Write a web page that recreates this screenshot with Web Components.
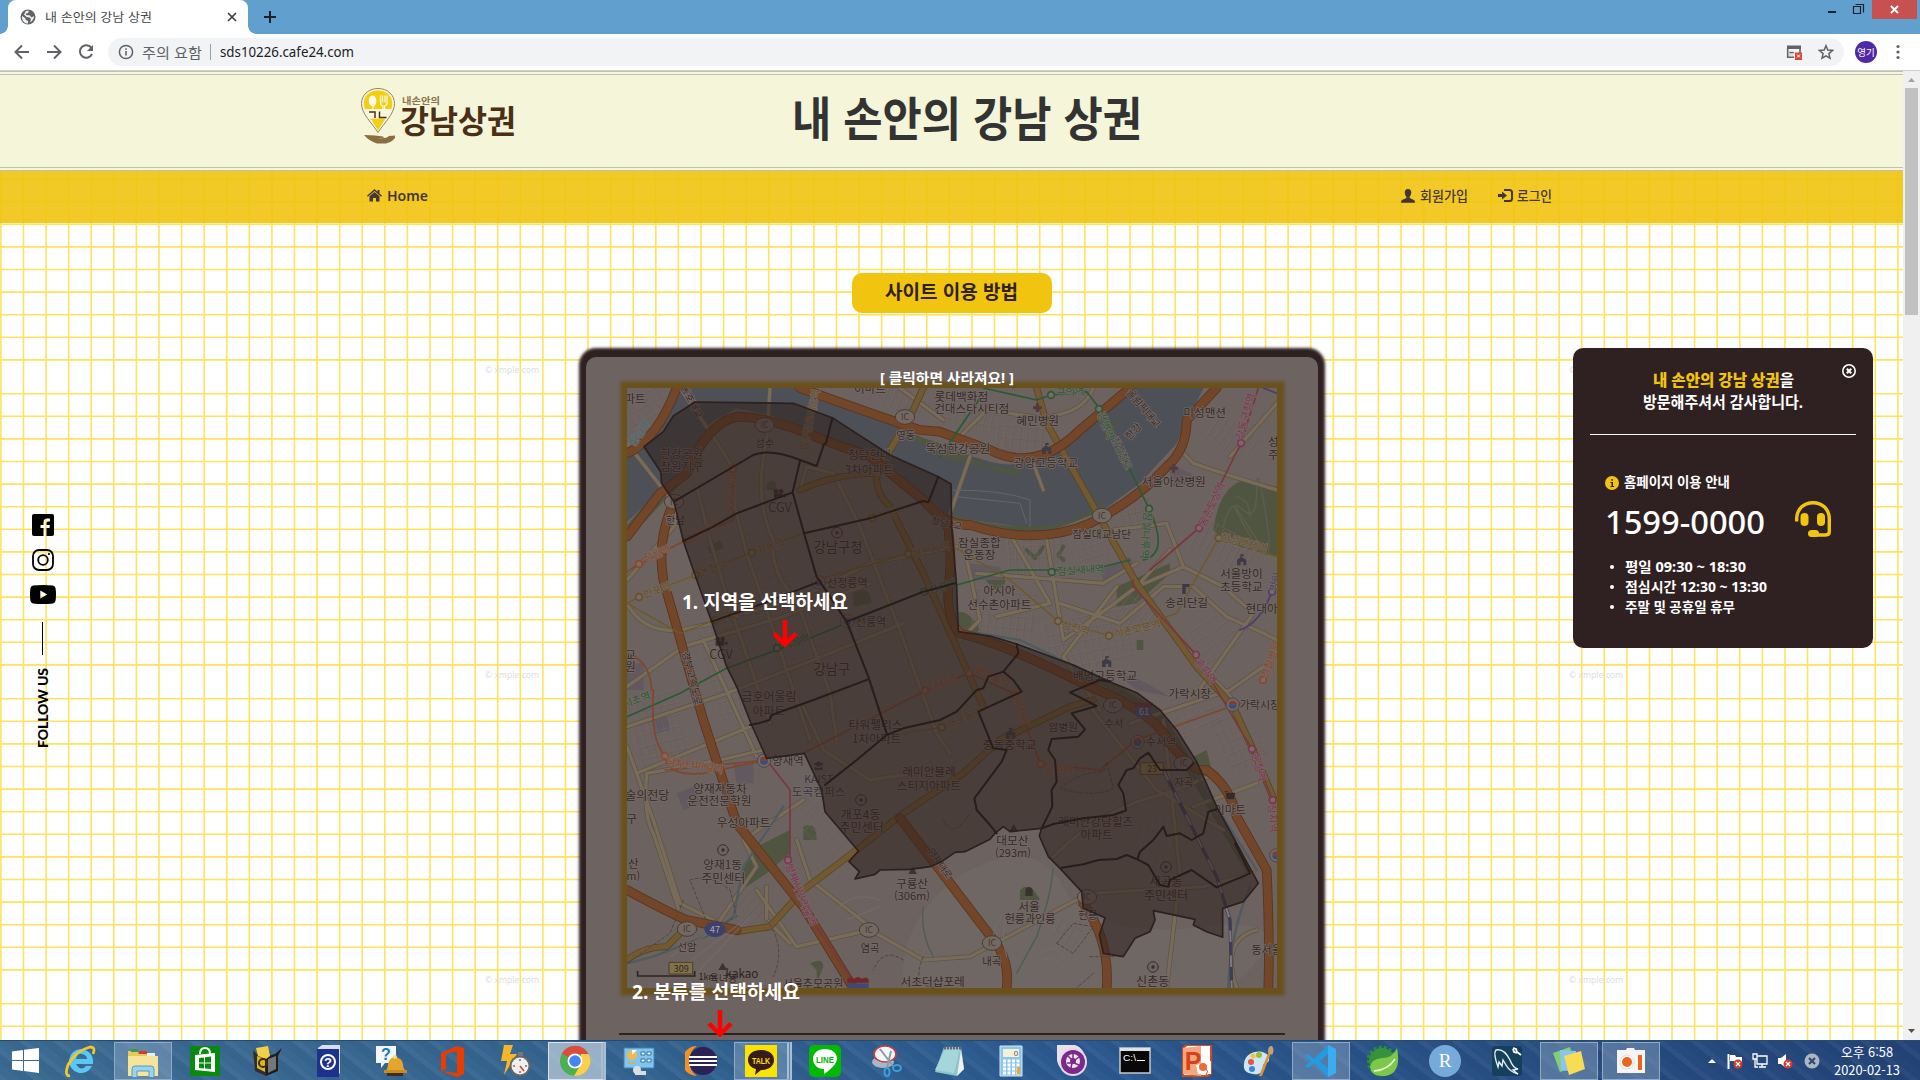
<!DOCTYPE html>
<html lang="ko">
<head>
<meta charset="utf-8">
<title>내 손안의 강남 상권</title>
<style>
html,body{margin:0;padding:0;height:100%;overflow:hidden;background:#fff;font-family:"Noto Sans","Noto Sans CJK KR",sans-serif}
</style>
</head>
<body>
<desk-top></desk-top>
<script>
function define(name, html, after){
  customElements.define(name, class extends HTMLElement{
    connectedCallback(){
      if(this.shadowRoot) return;
      const root=this.attachShadow({mode:'open'});
      const t=document.createElement('template');
      t.innerHTML=typeof html==='function'?html(this):html;
      root.appendChild(t.content.cloneNode(true));
      if(after) after(this,root);
    }
  });
}

/* One line of text stretched to a given width */
define('fit-text',`<style>:host{display:inline-block;white-space:nowrap;line-height:1.2;flex:none}span{display:inline-block;transform-origin:0 50%}</style><span><slot></slot></span>`,
 (el,root)=>{
  const w=+el.getAttribute('w'), s=root.querySelector('span');
  const n=s.getBoundingClientRect().width;
  el.style.width=w+'px';
  if(n) s.style.transform='scaleX('+w/n+')';
 });

define('browser-chrome',`
<style>
:host{display:flex;flex-direction:column;height:71px;flex:none;font-family:"Noto Sans CJK KR",sans-serif}
.strip{height:34px;background:#619fcf;display:flex;align-items:stretch}
.tab{margin-left:8px;width:240px;background:#fff;border-radius:8px 8px 0 0;display:flex;align-items:center;font-size:12px;color:#45494d;position:relative}
.tab:before,.tab:after{content:"";position:absolute;bottom:0;width:8px;height:8px}
.tab:before{left:-8px;background:radial-gradient(circle at 0 0,transparent 7.5px,#fff 8px)}
.tab:after{right:-8px;background:radial-gradient(circle at 100% 0,transparent 7.5px,#fff 8px)}
.tab>svg:first-child{margin:0 9px 0 12px}
.tab .x{margin-left:auto;margin-right:11px}
.plus{margin:11px 0 0 16px}
.win{margin-left:auto;display:flex;align-items:flex-start;margin-right:3px}
.close{width:45px;height:19px;background:#c75050;display:flex;align-items:center;justify-content:center}
.bar{height:36px;background:#fff;display:flex;align-items:center;border-bottom:1px solid #cfd1ce}
.nav{display:flex;gap:12px;padding-left:12px;width:96px;box-sizing:border-box}
.omni{width:1736px;height:28px;border-radius:14px;background:#f1f3f4;display:flex;align-items:center;box-sizing:border-box;font-size:14px;color:#5f6368;margin-left:12px}
.omni .i{margin:0 8px 0 10px}
.div{width:1px;height:16px;background:#9aa0a6;margin:0 9px 0 8px}
.url{color:#202124;font-family:"Noto Sans",sans-serif}
.pop{margin-left:auto;margin-right:15px}.star{margin-right:10px}
.av{width:22px;height:22px;border-radius:50%;background:#4f2aa8;color:#fff;font-size:9.5px;display:flex;align-items:center;justify-content:center;margin:0 19px 0 11px}
</style>
<div class="strip">
 <div class="tab"><svg width="16" height="16" viewBox="0 0 16 16"><circle cx="8" cy="8" r="7.500" fill="#5f6368"/><path d="M2 7l3 2 1 2 2 1v2.600C4 14.500 1.500 11 2 7zM6 2l3-.5-1 2.500-2 .5v1.500l4 .5 1.500 2L14 7c0 3-1.500 5-4 6.300L11 10 9.500 8.500 6.500 8 4 5.500z" fill="#fff" opacity=".9"/></svg>
 <fit-text w="107">내 손안의 강남 상권</fit-text>
 <svg class="x" width="10" height="10" viewBox="0 0 10 10" stroke="#3c4043" stroke-width="1.700"><path d="M1 1l8 8M9 1l-8 8"/></svg></div>
 <svg class="plus" width="12" height="12" viewBox="0 0 12 12" stroke="#202124" stroke-width="2"><path d="M6 0v12M0 6h12"/></svg>
 <div class="win"><svg width="44" height="19" viewBox="0 0 44 19" fill="none" stroke="#202124"><path d="M0 12h8" stroke-width="2"/><path d="M25.500 6.500h7v7h-7zM25 6.500h8M27.500 4.500h8v8" stroke-width="1.200"/></svg>
 <div class="close"><svg width="9" height="9" viewBox="0 0 9 9" stroke="#fff" stroke-width="2"><path d="M1 1l7 7M8 1l-7 7"/></svg></div></div>
</div>
<div class="bar">
 <div class="nav">
 <svg width="20" height="20" viewBox="0 0 20 20" fill="none" stroke="#5f6368" stroke-width="2"><path d="M17 10H4M10 3.500L3.500 10l6.500 6.500"/></svg>
 <svg width="20" height="20" viewBox="0 0 20 20" fill="none" stroke="#5f6368" stroke-width="2"><path d="M3 10h13M10 3.500l6.500 6.500-6.500 6.500"/></svg>
 <svg width="20" height="20" viewBox="0 0 20 20" fill="none" stroke="#5f6368" stroke-width="2"><path d="M15.500 6A6.300 6.300 0 1 0 16 12"/><path d="M17 3v6h-6z" fill="#5f6368" stroke="none"/></svg></div>
 <div class="omni">
  <svg class="i" width="16" height="16" viewBox="0 0 16 16"><circle cx="8" cy="8" r="6.600" fill="none" stroke="#5f6368" stroke-width="1.500"/><path d="M8 7v4.500M8 4.200v1.600" stroke="#5f6368" stroke-width="1.600"/></svg>
  <fit-text w="60">주의 요함</fit-text><i class="div"></i><fit-text class="url" w="134">sds10226.cafe24.com</fit-text>
  <svg class="pop" width="17" height="16" viewBox="0 0 17 16"><path d="M1.700 4v9.300H8M14 4v5" fill="none" stroke="#5f6368" stroke-width="1.600"/><path d="M1 1.500h14V5H1z" fill="#5f6368"/><path d="M3 8h5v1.500H3zM3 11h4" stroke="#c4c7c9"/><path d="M9 8.500h7V16H9z" fill="#db4437"/><path d="M11 10.500l3 3M14 10.500l-3 3" stroke="#fff"/></svg>
  <svg class="star" width="16" height="16" viewBox="0 0 16 16" fill="none" stroke="#5f6368" stroke-width="1.500"><path d="M8 1.700l1.800 4.400 4.700.4-3.600 3.100 1.100 4.600L8 11.800l-4 2.400 1.100-4.600L1.500 6.500l4.700-.4z"/></svg>
 </div>
 <div class="av">영기</div>
 <svg width="4" height="16" viewBox="0 0 4 16" fill="#5f6368"><circle cx="2" cy="2.500" r="1.600"/><circle cx="2" cy="8" r="1.600"/><circle cx="2" cy="13.500" r="1.600"/></svg>
</div>`);

/* Notebook grid that repeats every 1084 x 305 px */
define('grid-paper',()=>{
  let v='',h='',t='';
  for(let i=0;i<85;i++) v+=`M${(0.9+i*22.583).toFixed(2)} 0V969`;
  for(let k=-1;k<4;k++) for(let j=0;j<13;j++){const y=17.700+k*305+j*22.600; if(y>0&&y<969) h+=`M0 ${y.toFixed(2)}H1903`;}
  for(const x of [485,1569]) for(const y of [302,607,912]) t+=`<text x="${x}" y="${y}" textLength="54" lengthAdjust="spacingAndGlyphs">© xmple.com</text>`;
  return `<style>:host{display:block}svg{display:block}text{font:9.500px "Noto Sans",sans-serif;fill:#dedede}</style>
  <svg width="1903" height="969"><path d="${v}${h}" stroke="#ffe14f" stroke-width="1.600" opacity=".92"/>${t}</svg>`;
});

define('site-header',`
<style>
:host{display:block;height:100px;box-sizing:border-box;background:#f5f5d9;border-top:4px double #c0c1b1;border-bottom:4px double #c0c1b1;flex:none}
.row{display:flex;align-items:flex-start;height:92px;padding-left:360px}
.pin{margin-top:12px}
.name{display:flex;flex-direction:column;margin:19px 0 0 5px;width:120px;font-family:"Noto Sans CJK KR",sans-serif}
.s{font-size:9.500px;font-weight:700;color:#8b7348;line-height:12px;margin-left:1px}
.b{font-size:32px;font-weight:700;color:#4b3016;line-height:31px;margin-left:-1px;margin-top:-2px}
.t{margin:13px 0 0 271px;font:700 47px/56px "Noto Sans CJK KR",sans-serif;color:#333}
</style>
<div class="row">
<svg class="pin" width="36" height="58" viewBox="0 0 36 58"><path d="M18 1.500C8 1.500 1.500 8.500 1.500 16.500 1.500 27 12 36 18 45.500 24 36 34.500 27 34.500 16.500 34.500 8.500 28 1.500 18 1.500z" fill="#f9f6df" stroke="#97855a" stroke-width="1"/><path d="M18 3.500C9 3.500 4 9 3.800 16.500q0 3 1 5.500h26.500q1-2.500 1-5.500C32 9 27 3.500 18 3.500zM10.500 31.500h15L18 43.500z" fill="#f3cf14"/><path d="M12.500 8.500c-5 0-5 10 0 11v3c0 1 1 1 1 0v-3c4-1 4-11-1-11z" fill="#fffbe9"/><path d="M20.500 8.500v7q0 3 2.500 3.500v4h1.500v-4q2.500-.5 2.500-3.500v-7M22.500 8.500v7M25 8.500v7" stroke="#fffbe9" fill="none" stroke-width="1.200"/><path d="M9 25h6v6M19.500 24.500v6h7" stroke="#4b3016" stroke-width="1.500" fill="none"/><path d="M4 48q7 0 11 .5l8 1q2 1-1 1.500h-4q8 1 11-2l6-.5v2.500q-3 4-9 5.500H17Q9 54 4 48z" fill="#8b6d42"/></svg>
<div class="name"><fit-text class="s" w="38">내손안의</fit-text><fit-text class="b" w="116">강남상권</fit-text></div>
<fit-text class="t" w="350">내 손안의 강남 상권</fit-text>
</div>`);

define('site-nav',`
<style>
:host{display:flex;height:52px;box-sizing:border-box;align-items:center;background:#f1c40f;opacity:.9;padding:0 351px 3px 367px;font:700 14px "Noto Sans CJK KR",sans-serif;color:#2f2122;flex:none}
.i{display:flex;align-items:center}
.home{font:600 15px "Noto Sans",sans-serif}
.j{margin-left:auto;margin-right:30px}
.kr{font-weight:500;font-size:13.500px}
fit-text{padding-bottom:1px}
</style>
<div class="i home"><svg width="15" height="13" viewBox="0 0 15 13" fill="#2f2122" style="margin-right:5px"><path d="M7.500 0L0 6.700l.9 1L7.500 2l6.600 5.700.9-1-2.500-2.200V1h-2v1.700zM7.500 3L2.500 7.300V12.500H6V9h3v3.500h3.500V7.300z"/></svg><fit-text w="41">Home</fit-text></div>
<div class="i kr j"><svg width="14" height="14" viewBox="0 0 14 14" fill="#2f2122" style="margin-right:5px"><path d="M7 0c-2.500 0-3.500 2-3.200 4.200.2 1.500.8 2.800 1.600 3.600V9L1 11Q0 11.500 0 13.800h14Q14 11.500 13 11L8.600 9V7.800c.8-.8 1.400-2.100 1.600-3.600C10.500 2 9.500 0 7 0z"/></svg><fit-text w="48">회원가입</fit-text></div>
<div class="i kr"><svg width="15" height="13" viewBox="0 0 15 13" fill="#2f2122" style="margin-right:4px"><path d="M0 5h4V2.500L9 6.500 4 10.500V8H0z"/><path d="M6 1h5.500Q14 1 14 3.500v6Q14 12 11.500 12H6" fill="none" stroke="#2f2122" stroke-width="2"/></svg><fit-text w="35">로그인</fit-text></div>`);

define('follow-us',`
<style>
:host{display:flex;flex-direction:column;align-items:center;width:28px}
.l{width:1px;height:33px;background:#000;margin:18px 1px 13px 0;flex:none}
.t{writing-mode:vertical-rl;transform:rotate(180deg);font:900 14px/16px Lato,sans-serif;height:80px;white-space:nowrap;letter-spacing:-.1px;text-align:left}
svg{display:block}
</style>
<svg width="22" height="22" viewBox="0 0 22 22"><path fill-rule="evenodd" d="M2 0h18q2 0 2 2v18q0 2-2 2h-5.500v-8h3l.4-3h-3.400V9q0-1.600 1.600-1.600h1.800V4.600h-2.700Q11.500 4.600 11.500 8.400V11h-3v3h3v8H2q-2 0-2-2V2q0-2 2-2z"/></svg>
<svg width="22" height="22" viewBox="0 0 22 22" fill="none" stroke="#000" stroke-width="1.800" style="margin:13px 0 14px"><rect x="1" y="1" width="20" height="20" rx="6"/><circle cx="11" cy="11" r="4.800"/><circle cx="17" cy="5" r=".7" fill="#000" stroke-width="1"/></svg>
<svg width="26" height="19" viewBox="0 0 26 19"><path fill-rule="evenodd" d="M3 .6Q13-.6 23 .6q2.300.4 2.600 2.900.8 6 0 12-.3 2.500-2.600 2.900-10 1.200-20 0Q.7 18 .4 15.500q-.8-6 0-12Q.7 1 3 .6zM10.300 5.500v8L17.300 9.500z"/></svg>
<i class="l"></i><div class="t">FOLLOW US</div>`);

define('info-panel',`
<style>
:host{display:flex;flex-direction:column;width:300px;height:300px;box-sizing:border-box;border-radius:10px;background:#2f2122;color:#fff;padding:0 17px;font:700 14px "Noto Sans","Noto Sans CJK KR",sans-serif;position:relative}
.c{position:absolute;right:17px;top:16px}
.h{display:flex;flex-direction:column;align-items:center;padding-top:21px;height:65px;font-size:15.500px;line-height:22px;border-bottom:1px solid #fff}
.h fit-text{line-height:22px}
b{color:#f1c40f}
.n{display:flex;align-items:center;gap:5px;margin:38px 0 0 15px;height:20px;font-size:13.500px}
.n fit-text{padding-bottom:1px}
.p{display:flex;align-items:center;margin-left:15px;height:50px;margin-top:3px}
.p fit-text{font:500 32px "Noto Sans",sans-serif}
.p svg{margin-left:30px;margin-bottom:4px}
ul{margin:11px 0 0;padding:0 0 0 35px;list-style:none;font-size:13.500px}
li{height:20px;display:flex;align-items:center;position:relative}
li:before{content:"";position:absolute;left:-15px;width:4px;height:4px;border-radius:2px;background:#fff}
</style>
<svg class="c" width="14" height="14" viewBox="0 0 14 14" fill="none" stroke="#fff"><circle cx="7" cy="7" r="6.200" stroke-width="1.600"/><path d="M4.800 4.800l4.400 4.400M9.200 4.800L4.800 9.200" stroke-width="2.200"/></svg>
<div class="h"><fit-text w="141"><b>내 손안의 강남 상권</b>을</fit-text><fit-text w="160">방문해주셔서 감사합니다.</fit-text></div>
<div class="n"><svg width="14" height="14" viewBox="0 0 14 14"><circle cx="7" cy="7" r="7" fill="#f1c40f"/><path d="M5.500 6H8v4h1v1H5.500v-1h1V7h-1zM6.300 3h1.600v1.800H6.300z" fill="#2f2122"/></svg><fit-text w="106">홈페이지 이용 안내</fit-text></div>
<div class="p"><fit-text w="160">1599-0000</fit-text><svg width="36" height="36" viewBox="0 0 36 36" fill="none" stroke="#f1c40f"><path d="M1.700 20.500V18C1.700 8 9 1.700 18 1.700S34.300 8 34.300 18v12.500q0 3.500-3.500 3.500H18" stroke-width="3.400"/><rect x="5.500" y="12" width="8" height="13" rx="4" fill="#f1c40f" stroke="none"/><rect x="22" y="12" width="8" height="13" rx="4" fill="#f1c40f" stroke="none"/><rect x="13" y="29" width="11" height="7" rx="3.500" fill="#f1c40f" stroke="none"/></svg></div>
<ul><li><fit-text w="121">평일 09:30 ~ 18:30</fit-text></li><li><fit-text w="142">점심시간 12:30 ~ 13:30</fit-text></li><li><fit-text w="110">주말 및 공휴일 휴무</fit-text></li></ul>`);

/* District map: three drawing units to one pixel */
define('district-map',()=>{
  const area='M222 320L280 275 310 228 375 186 670 190 790 235 960 345 1105 410 1143 432 1145 560 1160 740 1165 875 1260 888 1340 912 1510 975 1630 1030 1700 1058 1770 1110 1820 1170 1880 1265 1940 1400 2065 1630 2020 1685 1958 1705V1792L1910 1775 1870 1755 1875 1738 1750 1712 1755 1740 1740 1775 1695 1795 1660 1850 1600 1840 1588 1785 1605 1733 1540 1705 1535 1655 1470 1585 1435 1550 1408 1488 1415 1465 1320 1475 1300 1460 1275 1480 1260 1498 1185 1535 1155 1537 1115 1565 1080 1580 1020 1588 930 1590 915 1603 855 1617 868 1595 837 1565 865 1533 765 1415 755 1350 703 1240 590 1255 545 1155 500 1040 470 980 425 845 375 705 340 603 312 485 275 430 272 395z';
  const inner='M312 485L550 345Q600 325 690 360L740 378 762 312 768 310 787 235M340 603L430 560 500 520 620 475 668 457 690 362M668 457L702 580 740 710 830 845 895 1010 950 1180M702 580L900 535 1060 483 1075 487 1105 410M425 845L580 790 740 728M830 845L1060 755 1155 730M540 1155L565 1150 598 1140 605 1125 730 1080 895 1018M765 1335L860 1260 950 1185 1000 1165 1110 1140 1160 1115 1220 1050 1240 1045 1255 1010 1300 995 1345 940 1340 912M1300 995L1330 1020 1355 1055 1225 1115 1270 1225 1310 1230 1295 1265 1213 1375 1220 1410 1260 1455 1280 1480M1620 1025L1590 1020 1500 1057 1580 1098 1505 1120 1545 1168 1525 1190 1445 1197 1435 1230 1455 1260 1460 1325 1445 1350 1447 1400 1415 1465 1450 1452 1540 1435 1630 1425 1668 1412 1660 1360 1645 1335 1670 1290 1690 1285 1710 1255 1735 1238 1770 1290 1850 1290 1870 1270M1475 1583L1540 1573 1585 1560 1640 1557 1670 1545 1702 1558 1735 1575 1770 1635 1795 1640 1800 1620 1865 1590 1940 1642 2040 1600 1995 1510M1702 1558L1710 1535 1750 1500 1780 1460 1790 1488 1830 1480 1865 1500 1900 1480 1915 1415 1940 1408';
  const orange='M171 340Q260 300 320 144M690 144Q900 220 1050 270L1110 275 1260 330Q1400 400 1530 270L1680 144M171 590L270 460 350 400Q410 250 500 230 600 230 760 300L900 350 1060 480Q1130 560 1200 555 1400 620 1560 550 1700 480 1790 380 1850 330 1850 240L1940 144M1130 540Q1150 650 1135 740 1130 840 1170 880 1300 910 1560 1040 1760 1120 1800 1210 1870 1300 1910 1290 1980 1340 2000 1430L2090 1590Q2100 1800 2095 1944M310 490Q260 600 280 720L400 1140 500 1450 620 1600 700 1700 850 1944M171 1650Q300 1720 350 1740L500 1770M990 1435L1110 1590 1270 1800Q1320 1860 1310 1944M1540 1690Q1620 1800 1610 1944';
  const gold='M1060 144L1020 230 930 380Q900 440 960 500L1060 700 1240 1100M1400 144L1430 250 1560 480 1700 730 1880 980 1990 1100 2050 1230 2121 1400M920 400Q800 400 690 450M860 1530L700 1650 600 1760 500 1775M171 1860Q220 1820 290 1820L350 1760M860 1530L1000 1420 1180 1300 1290 1200 1500 1100 1570 1080';
  const minor='M171 310L320 500 312 560 171 720M480 370L430 290 330 144M600 144L590 300Q550 480 610 600 600 700 680 780L780 1060 800 1200M690 450L710 380 790 400 870 560 1000 900 1100 1180 1140 1240M171 790Q220 880 330 870L430 850 700 770 900 670 1160 620M171 1040L340 920 640 830 900 730M380 440L420 600 480 800 600 1150M490 480L530 640 620 900 720 1200M400 900L560 1250M171 1160L470 1060 730 960 1000 850M200 1300L540 1160M171 1220L250 1440 330 1690 430 1740M230 1300L450 1260 580 1230M230 1300Q220 1430 250 1480L330 1720M430 1770L560 1580 520 1500 700 1380M700 1100L760 1230 900 1320 1100 1290M560 1650L680 1820 900 1770 1060 1860 1200 1850 1500 1690 1560 1660 1900 1640 2050 1600M680 1500L720 1620 900 1760M590 1640V1740L660 1810M1180 610L1230 840 1170 900M1330 600L1440 790 1280 830M1430 600L1480 900 1620 800 1700 740 1840 680M1630 570L1790 550 1840 680 1960 740 2050 820 1880 1060M1640 740L1480 950 1590 1110M1470 790L1650 850 1780 740 1870 740 1970 830 2060 870 2121 900M1800 870L1990 1080M1800 630L1700 740M1680 1150L1980 1050 2080 980M1870 1400L2060 1330M1450 1550Q1600 1400 1790 1360L1940 1300M1780 1140L1830 1600 1790 1944M1560 1100L1760 1350 1960 1470M2000 1944Q1950 1800 2060 1770M1200 350L1120 580M1120 240L990 144M1170 290L1250 210 1390 230M1430 230Q1540 220 1570 144M1820 320L1870 370 1990 410 2121 450M1980 350L2121 190M1420 450L1390 370M1220 700L1600 730 1700 670';
  let fine='';
  const hatch=(x,y,w,h,a,s)=>{const c=Math.cos(a),d=Math.sin(a);for(let i=-w/2;i<=w/2;i+=s)fine+=`M${(x+i*c+h/2*d).toFixed(0)} ${(y+i*d-h/2*c).toFixed(0)}L${(x+i*c-h/2*d).toFixed(0)} ${(y+i*d+h/2*c).toFixed(0)}`;for(let j=-h/2;j<=h/2;j+=s*1.600)fine+=`M${(x-w/2*c-j*d).toFixed(0)} ${(y-w/2*d+j*c).toFixed(0)}L${(x+w/2*c-j*d).toFixed(0)} ${(y+w/2*d+j*c).toFixed(0)}`;};
  [[230,210,110,100,-.5],[500,640,260,240,-.28],[700,860,260,300,-.28],[870,490,280,120,-.25],[900,1000,260,280,-.35],[1030,680,150,200,-.3],[270,1170,150,210,-.25],[470,980,120,300,-.28],[1210,220,150,90,.2],[980,180,160,60,.4],[1560,900,260,150,-.2],[1300,820,180,130,.1],[1400,640,170,120,-.05],[1720,820,130,110,.6],[1960,620,180,100,.5],[1920,900,170,110,-.6],[1700,520,100,80,-.2],[1990,300,150,90,.6],[1350,300,140,80,.1],[780,1450,140,150,-.8],[1050,1240,200,150,-.5],[1330,1160,170,130,-.3],[1880,1110,130,120,-.4],[2010,1200,120,160,-.4],[1490,1780,70,60,.5],[540,1710,80,80,.7],[1750,1500,110,150,.2],[1560,620,90,80,-.3]].forEach(a=>hatch(...a,22));
  const brown='#352a28',L=[];
  const T=(x,y,s,o={})=>L.push(`<text x="${x}" y="${y}" fill="${o.c||brown}" font-size="${o.s||35}"${o.r?` transform="rotate(${o.r} ${x} ${y-10})"`:''}>${s}</text>`);
  T(195,190,'파트',{});T(335,355,'한강공원');T(335,393,'잠원지구');T(584,320,'성수',{s:31});T(898,358,'청담현대');T(898,401,'3차아파트');T(900,158,'이마트');T(1174,182,'롯데백화점');T(1205,218,'건대스타시티점');T(1007,297,'영동',{s:31});T(1164,338,'뚝섬한강공원');T(1403,254,'혜민병원');T(1428,380,'광양고등학교');T(1904,232,'미성맨션');T(1811,438,'서울아산병원');T(1595,593,'잠실대교남단',{s:32});T(1228,620,'잠실종합');T(1228,658,'운동장');T(1288,764,'아시아');T(1288,808,'선수촌아파트');T(2014,714,'서울방이');T(2014,753,'초등학교');T(1850,801,'송리단길');T(2075,818,'현대아');T(1605,1019,'배명고등학교');T(1859,1073,'가락시장');T(630,515,'CGV',{s:38});T(453,956,'CGV',{s:38});T(316,553,'한남',{s:31});T(804,636,'강남구청',{s:40});T(786,1001,'강남구',{s:40});T(832,740,'선정릉역',{s:33});T(903,857,'선릉역',{s:33});T(597,1084,'금호어울림',{s:36});T(597,1127,'아파트',{s:36});T(917,1166,'타워팰리스');T(920,1209,'1차아파트');T(654,1275,'양재역',{s:34});T(746,1328,'KAIST',{s:32,c:'#33333f'});T(746,1367,'도곡캠퍼스',{c:'#33333f'});T(1077,1309,'래미안블레');T(1077,1351,'스티지아파트');T(872,1436,'개포4동',{s:36});T(875,1476,'주민센터',{s:36});T(232,1380,'술의전당',{s:36});T(185,1450,'구');T(190,1585,'산');T(190,1621,'m)',{s:32});T(450,1359,'양재자동차');T(448,1395,'운전전문학원');T(521,1460,'우성아파트');T(458,1586,'양재1동');T(460,1629,'주민센터',{s:36});T(351,1834,'선암',{s:31});T(900,1836,'염곡',{s:31});T(1026,1643,'구룡산');T(1026,1680,'(306m)',{s:33});T(729,1943,'서울추모공원',{s:33});T(1088,1938,'서초더샵포레');T(460,1925,'옥녀봉',{s:30});T(1327,1514,'대모산');T(1329,1551,'(293m)',{s:33});T(1319,1228,'중동중학교',{s:35});T(1480,1172,'암병원',{s:32});T(1631,1160,'수서',{s:31});T(1773,1218,'수서역',{s:33});T(1841,1337,'자곡',{s:31});T(1980,1423,'이마트');T(1577,1457,'래미안강담힐즈');T(1580,1497,'아파트');T(1788,1637,'세곡동',{s:36});T(1788,1680,'주민센터',{s:36});T(1377,1713,'서울');T(1380,1750,'헌릉과인릉',{s:33});T(1553,1737,'헌릉',{s:31});T(1265,1874,'내곡',{s:31});T(1748,1937,'신촌동',{s:36});T(2090,1843,'동서울',{s:33});T(2070,1106,'가락시장',{s:33});T(2110,318,'성');T(2110,358,'주');T(181,956,'교');T(181,994,'원');
  const st=(x,y,s,c,r=0,dx=0,dy=0)=>{L.push(`<circle cx="${x}" cy="${y}" r="10" fill="#766b68" stroke="${c}" stroke-width="5"/>`);if(s)T(x+dx,y+dy+10,s,{c,r,s:31});};
  const G='#285b34',O='#8f4725',Y='#6a5122',P='#823252',V='#4e3c70';
  st(207,672,'잠원역',O,-22,55,-30);st(207,771,'반포역',Y,-18,55,-20);st(355,597,'신사역',O,-25,50,-25);st(376,705,'논현역',Y,-18,55,-20);st(545,638,'학동역',Y,-18,58,-18);st(489,387,'압구정역',O,94,-8,70);st(907,534,'청담역',Y,-15,58,-15);st(1014,641,'봉은사역',Y,-12,70,-10);st(436,840,'신논현역',Y,-15,60,-20);st(621,924,'역삼역',G,-18,58,-18);st(1062,755,'삼성역',G,-15,55,-15);st(1065,1052,'대치역',O,-20,55,-22);st(1198,1000,'학여울역',O,20,70,10);st(1443,165,'구의역',G,-3,58,-8);st(1587,207,'강변역',G,68,20,50);st(1737,506,'잠실나루역',G,94,-10,80);st(1445,696,'잠실새내역',G,-4,87,-5);st(1464,843,'삼전역',Y,15,54,22);st(1617,887,'석촌고분역',Y,-13,85,-20);st(1887,564,'몽촌토성역',P,-65,40,-70);st(2013,309,'강동구청역',P,-75,15,-80);st(1946,594,'한성백제역',Y,15,76,16);st(2106,755,'방이',V,-75,10,-30);st(1878,944,'송파역',P,55,30,50);st(2079,1020,'경찰병원',O,-70,25,-60);st(2046,1227,'문정역',P,75,20,55);st(2108,1380,'장지역',P,85,0,55);st(1412,1272,'일원역',O,2,55,18);st(1115,1162,'개포동역',Y,-22,70,-28);st(285,1248,'남부터미널역',O,8,90,30);st(654,1560,'양재시민의숲역',P,68,38,105);st(1335,1065,'대청역',O,75,18,50);
  T(200,1090,'서초역',{c:G,r:-20,s:31});T(210,290,'한남역',{c:'#3d6d72',r:-55,s:32});T(720,250,'압구정로데오역',{c:Y,r:-78,s:29});T(1690,285,'한강',{r:-45,s:30});T(1720,215,'올림픽대교',{r:50,s:30});T(1655,350,'잠실철교',{c:'#3a4c3b',r:65,s:28});T(1130,560,'청담2교',{r:12,s:28});T(365,195,'동호대교',{r:62,s:29});T(365,1025,'경부고속도로',{r:76,s:30});T(1110,1580,'양재대로',{r:55,s:28});
  const ic=(x,y,t='IC')=>`<ellipse cx="${x}" cy="${y}" rx="29" ry="22" fill="#746862" stroke="#493d39" stroke-width="3"/><text x="${x}" y="${y+9}" font-size="25" font-weight="700" fill="#40352f">${t}</text>`;
  const dot=(x,y)=>`<circle cx="${x}" cy="${y}" r="16" fill="#6d6260" stroke="#3a2f2e" stroke-width="3"/><circle cx="${x}" cy="${y}" r="5" fill="#3a2f2e"/>`;
  const hub=(x,y)=>`<circle cx="${x}" cy="${y}" r="20" fill="#726866" stroke="#50464a" stroke-width="3"/><path d="M${x-12} ${y}a12 12 0 0 1 24 0z" fill="#873b31"/><path d="M${x-12} ${y}a12 12 0 0 0 24 0z" fill="#374b84"/>`;
  const school=(x,y)=>`<path d="M${x-14} ${y+16}v-17l10-7v-9h10v6h-6v3l14 7v17h-9v-10h-8v10z" fill="#3d3b46"/>`;
  const cross=(x,y)=>`<path d="M${x} ${y-13}v26M${x-13} ${y}h26" stroke="#513a3c" stroke-width="9" stroke-linecap="butt"/>`;
  const cam=(x,y)=>`<path d="M${x-16} ${y}h25v14h-25zM${x+10} ${y+5}l9-5v13l-9-5z" fill="#372c2b"/><circle cx="${x-10}" cy="${y-6}" r="7" fill="#372c2b"/><circle cx="${x+5}" cy="${y-6}" r="7" fill="#372c2b"/>`;
  return `<style>:host{display:block}svg{display:block}text{font-family:"Noto Sans CJK KR",sans-serif;text-anchor:middle;font-weight:400}.lab text{paint-order:stroke;stroke:#746966;stroke-width:5px;stroke-linejoin:round}</style>
  <svg width="650" height="600" viewBox="171 144 1950 1800" fill="none" stroke-linejoin="round" stroke-linecap="round">
  <path d="M171 144H2121V1944H171z" fill="#6c625f"/>
  <path d="M1180 1600Q1400 1480 1480 1640T1900 1760 1980 1944H1000Q980 1740 1180 1600z" fill="#716967" opacity=".7"/>
  <path d="M171 350L270 250 320 144H730L1000 265 1110 320 1260 365Q1390 400 1500 290L1670 144H1900L1820 310 1710 430 1600 510 1500 550 1390 565 1240 545 1140 530 1060 465 900 365 760 285 600 225 500 205 420 250 370 360 171 545z" fill="#4d5056"/>
  <path d="M171 555L275 435 380 350 400 360 171 600zM1000 275L1110 310 1250 375 1360 390 1330 405 1110 350zM1140 520Q1300 580 1500 545L1600 490V510L1440 575 1250 570 1130 545zM1600 300L1680 200 1600 280zM1790 370L1860 250 1880 200 1820 370zM1930 570Q1950 430 2030 420L2121 440V650Q2000 620 1960 600zM1640 740L1800 670 1800 700 1700 790 1640 800zM560 1520L660 1470V1540L590 1600 530 1640 510 1600zM700 1460Q740 1440 740 1500L700 1500zM720 1870Q760 1850 760 1880L740 1930V1890zM1350 1650Q1380 1620 1410 1680H1350zM590 430Q620 410 620 450H590zM415 620L450 600 460 625 420 640zM850 760Q900 730 905 790L850 800zM1140 840Q1180 780 1230 870L1200 890zM1240 710H1300Q1320 740 1270 750zM1700 900H1720V930H1700zM1870 1250L1910 1230 1930 1310 1900 1290zM1480 990L1630 1030 1770 1110 1860 1250 2050 1600 2030 1600 1830 1260 1740 1120 1600 1040z" fill="#505542"/>
  <path d="M1960 560q20-90 60-50t40-60 30 90-60 30 50 60M2000 470q40 10 40 60" stroke="#5c5f4d" stroke-width="4"/>
  <path d="M1370 630l25 25 25-35M1480 620l-15 25 15 15" stroke="#505542" stroke-width="12" fill="none"/>
  <path d="M1190 670L1290 680 1300 720 1200 720zM1800 370L1880 410V430L1800 440zM240 1130L290 1120 300 1170 260 1180zM320 1360L370 1340 390 1390 340 1410zM1590 690L1680 650 1690 680 1600 720zM171 970h50v80h-50zM490 1270h60v60h-50zM1640 1000L1710 1020 1800 1070 1700 1050z" fill="#625960"/>
  <path d="${fine}" stroke="#7b706e" stroke-width="2" opacity=".5"/>
  <path d="${fine}" transform="translate(3 3)" stroke="#5e5352" stroke-width="2" opacity=".35"/>
  <path d="${minor}" stroke="#5d5246" stroke-width="14"/><path d="${minor}" stroke="#786c59" stroke-width="10"/>
  <path d="M1150 450Q1300 450 1380 480V560M1160 470L1350 490 1370 550M1730 455H1940M940 150L990 250M1760 470H1900" stroke="#66656a" stroke-width="3"/>
  <path d="M1610 1050Q1780 1130 1870 1290L2060 1590M1130 540L1165 870 1350 900 1590 1015M2040 1640Q1980 1780 1975 1944M640 1400L520 1580 490 1730 430 1780 250 1850 171 1870" stroke="#4e5b61" stroke-width="7"/>
  <path d="${gold}" stroke="#594624" stroke-width="21"/><path d="${gold}" stroke="#735932" stroke-width="16"/>
  <path d="${orange}" stroke="#59351f" stroke-width="29"/><path d="${orange}" stroke="#734529" stroke-width="24"/>
  <path d="M171 1130L330 1060 470 985 730 890 1060 755 1160 735 1320 690 1560 690 1680 660M1240 144L1400 180 1443 165 1550 155 1590 207 1737 506Q1800 640 1720 660M1110 350L1240 160" stroke="#285b34" stroke-width="5"/>
  <path d="M171 790L207 771 376 705 545 638 700 580M436 840L330 880 171 790M740 720L1014 641 1150 620M1150 620L1320 720 1464 843 1617 887 1820 820 1946 594 2121 650M1000 1180L1115 1162" stroke="#6f5827" stroke-width="4"/>
  <path d="M171 695L207 672 355 597 489 540V370M590 1260L285 1290M250 1050Q240 1200 285 1248 290 1310 400 1300L590 1260M700 1240L1065 1052 1198 1000 1330 1060 1412 1272 1590 1290 1700 1200 2010 1090M171 940Q240 960 245 1050" stroke="#81462d" stroke-width="5"/>
  <path d="M590 1260L660 1350V1560L700 1700 860 1944M1740 690L1887 564 2013 309 2065 144M1690 720V740L1878 944 2000 1150 2046 1227 2108 1380" stroke="#7b373e" stroke-width="5"/>
  <path d="M2010 870Q2070 850 2106 755L2121 700M2080 144L2121 160" stroke="#4e3c70" stroke-width="5"/>
  <path d="M1780 1290L1940 1610 1980 1740 1985 1944" stroke="#403b57" stroke-width="10"/><path d="M1780 1290L1940 1610 1980 1740 1985 1944" stroke="#817879" stroke-width="6" stroke-dasharray="35 40" stroke-linecap="butt"/>
  <path d="M1450 1585Q1440 1680 1400 1790L1340 1900M1060 1700Q1050 1780 1090 1850" stroke="#4d5d50" stroke-width="4"/>
  <path d="M1470 1345q60-50 130-50l10-30 20 80q-60 30-160 0zM1120 1440q30 60 80-20M1570 1900l-50 44M1560 1850h80M1460 1810l50-60 60 10-60 80zM360 1620q60-20 120 30l20 80-80 40zM590 1740q60 80 20 170M1060 1850q-40 90 40 94M340 1680l-40 100-129 90M1000 1860q-60-40-90 30" stroke="#514643" stroke-width="3" stroke-dasharray="9 7"/>
  <path d="M1300 1720q-50 60-20 150M1340 1700q-60 50-30 150M1400 1850q60-60 90 20M1400 1870q50-40 80 20M800 1710q50-60 130-30M830 1740l100-40M300 1850l150-90M340 1880l170-130M380 1900l160-170" stroke="#776c69" stroke-width="3"/>
  <g class="lab">${L.join('')}</g>
  ${[[584,255],[1005,231],[1596,527],[312,485],[351,1767],[897,1770],[1629,1096],[1841,1270],[1551,1671],[1266,1809]].map(a=>ic(...a)).join('')}
  ${[[801,578],[873,1380],[459,1530],[1788,1581],[1749,1881]].map(a=>dot(...a)).join('')}
  ${[[746,727],[832,844],[582,1262],[1703,1206],[1988,1094],[2119,1546]].map(a=>hub(...a)).join('')}
  ${school(1430,326)}${school(2015,660)}${school(1610,965)}${school(1322,1180)}${cross(1402,203)}${cross(1811,385)}${cam(628,460)}${cam(453,903)}
  <path d="M1015 1602h26l-13-22zM1318 1474h26l-13-22zM445 1890h26l-13-22z" fill="#3d3331"/>
  <path d="M1366 1668v-20q11-14 22 0v20z" fill="#3a3230"/><path d="M1837 732h22v10h-12v20h-10z" fill="#3c374a"/>
  <path d="M1970 1360h24l-4 16h-18zM1965 1355h8" stroke="#332a29" stroke-width="3" fill="#332a29"/>
  <path d="M730 1272l16-8 16 8-16 8zM734 1280q12 8 24 0v10h-24z" fill="#353542"/>
  <ellipse cx="435" cy="1768" rx="32" ry="23" fill="#3c406c"/><text x="435" y="1778" font-size="28" fill="#aaa4b0">47</text>
  <path d="M298 1867h70v35h-70zM1712 1268h68v35h-68z" fill="#82714a" stroke="#4c4029" stroke-width="3"/><text x="334" y="1895" font-size="27" fill="#302519">309</text><text x="1746" y="1295" font-size="26" fill="#302519">23</text>
  <path d="M1695 1090h52v30l-10 14h-32l-10-14z" fill="#484c72"/><path d="M1695 1088h52v12h-52z" fill="#713433"/><text x="1722" y="1124" font-size="28" fill="#a7a0a0">61</text>
  <path d="M832 1930h64v14h-64z" fill="#414878"/><path d="M832 1918l10-6 10 4 12-6 12 6 12-4 8 6v10h-64z" fill="#74252a"/>
  <path d="${area}" fill="#30211f" fill-opacity=".56" stroke="#2c2020" stroke-width="5"/>
  <path d="${inner}" stroke="#271d1b" stroke-width="6"/>
  <path d="M203 1893v15h171v-15" stroke="#2d2423" stroke-width="5" stroke-linecap="butt" stroke-linejoin="miter"/>
  <text x="413" y="1920" font-size="27" font-weight="700" fill="#2c2322">1km</text><text x="516" y="1915" font-size="35" font-weight="500" fill="#2c2322">kakao</text>
  </svg>`;});

define('guide-step',`
<style>:host{display:flex;flex-direction:column;align-items:flex-start;color:#fff;font:700 19px "Noto Sans","Noto Sans CJK KR",sans-serif;width:168px}svg{display:block;margin:6px 0 0 var(--arrow,0)}</style>
<fit-text w="166"></fit-text>
<svg width="26" height="27" viewBox="0 0 26 27"><path d="M13 0v24M2 13.500l11 11 11-11" fill="none" stroke="red" stroke-width="4.500"/></svg>`,
(el,root)=>{const f=root.querySelector('fit-text');f.textContent=el.getAttribute('label');
 const s=f.shadowRoot.querySelector('span');s.style.transform='none';f.style.width='auto';const n=s.getBoundingClientRect().width,w=+el.getAttribute('w');f.style.width=w+'px';s.style.transform='scaleX('+w/n+')';});

define('map-card',`
<style>
:host{display:flex;flex-direction:column;align-items:center;width:732px;height:760px;box-sizing:border-box;background:#6d6361;border-radius:10px;box-shadow:0 -1.500px 3px 7px #2f2122;position:relative;padding-top:31px}
district-map{box-shadow:0 0 3px 7.500px #6a511c}
hr{width:666px;height:2px;background:#2f2122;border:0;margin:45px 0 0}
.top{position:absolute;top:10px;left:294px;color:#fff;font:700 13.500px "Noto Sans","Noto Sans CJK KR",sans-serif}
.a{position:absolute;left:96px;top:234px;--arrow:90px}.b{position:absolute;left:46px;top:624px;--arrow:75px}
</style>
<district-map></district-map><hr>
<fit-text class="top" w="134">[ 클릭하면 사라져요! ]</fit-text>
<guide-step class="a" w="166" label="1. 지역을 선택하세요"></guide-step>
<guide-step class="b" w="168" label="2. 분류를 선택하세요"></guide-step>`);

define('web-page',`
<style>
:host{display:block;position:relative;width:1903px;height:969px;overflow:hidden;background:#fff}
grid-paper{position:absolute;inset:0}
.flow{position:relative;display:flex;flex-direction:column;height:100%}
.btn{align-self:center;flex:none;margin:50px 0 44px;width:200px;height:40px;border-radius:10px;background:#f1c40f;color:#2f2122;display:flex;align-items:center;justify-content:center;font:700 19px "Noto Sans CJK KR",sans-serif;padding-bottom:3px;box-sizing:border-box}
map-card{align-self:center;flex:none;left:.5px}
info-panel{position:absolute;left:1573px;top:277px}
follow-us{position:absolute;left:29px;top:443px}
</style>
<grid-paper></grid-paper>
<div class="flow"><site-header></site-header><site-nav></site-nav><div class="btn"><fit-text w="133">사이트 이용 방법</fit-text></div><map-card></map-card></div>
<info-panel></info-panel><follow-us></follow-us>`);

define('scroll-bar',`
<style>:host{display:flex;flex-direction:column;width:17px;background:#f0f0f0;align-items:center}svg{flex:none}i{width:13px;height:227px;background:#c1c1c1}b{flex:1}</style>
<svg width="17" height="17"><path d="M5 11h7L8.500 7z" fill="#a3a3a3"/></svg><i></i><b></b><svg width="17" height="17"><path d="M5 6h7L8.500 10z" fill="#505050"/></svg>`);

define('task-item',`<style>:host{display:flex;width:62px;height:40px;align-items:center;justify-content:center;flex:none;box-sizing:border-box;padding:0 2px}
div{display:flex;width:58px;height:38px;align-items:center;justify-content:center;box-sizing:border-box;border:1px solid transparent}
:host([on]) div{background:rgba(160,185,210,.38);border-color:#8fabc4}
:host([hot]) div{background:rgba(215,225,232,.62);border-color:#d9e3ea}
:host([stack]) div{border-right:5px double #a8bfd2}</style><div><slot></slot></div>`);

const ICONS=[
 ['','<path d="M16 4a12 12 0 1 0 11 17h-6q-5 6-10-2h17Q29 6 16 4zM11 14q1-6 6-5t5 5z" fill="#5cc8f2" fill-rule="evenodd"/><path d="M5 31Q-1 31 3 20 10 6 25 2q6 0 3 7" stroke="#f7c52b" stroke-width="2.800" fill="none"/>'],
 ['on','<path d="M1 6h9l2 3h16v22H1z" fill="#e9c75c"/><path d="M4 4h7v3H4z" fill="#3c9b48"/><path d="M12 6h8v3h-8z" fill="#d33b2f"/><path d="M20 8h8v3h-8z" fill="#e7eff6"/><path d="M1 11h30v20H1z" fill="#f7e49b"/><path d="M5 33v-9q0-3 3-3h16q3 0 3 3v9h-5v-7H10v7z" fill="#9bd2ee" stroke="#4f9cc4"/>'],
 ['','<path d="M1 1h30v30H1z" fill="#078a0d"/><path d="M11 9q0-6 5-6t5 6" stroke="#fff" stroke-width="2" fill="none"/><path d="M6 10l20-2v19l-20-2z" fill="#fff"/><path d="M10 13l5-.6v5h-5zm6-.8l6-.7v6h-6zM10 18.500h5v5l-5-.6zm6 0h6V24l-6-.6z" fill="#078a0d"/>'],
 ['','<path d="M2 5l4 4 9 3v19L4 26z" fill="#2e2e2e"/><path d="M15 12l9-3 7-6-4 8v15l-12 5z" fill="#1d1d1d"/><path d="M17 14l8-3v13l-8 4z" fill="#777"/><path d="M5 3l12-2 2 10-4 3-8-3z" fill="#f3d04a"/><path d="M6 11l8 3v13l-8-4z" fill="#e3b422"/><circle cx="12" cy="18" r="4" fill="none" stroke="#3b3015" stroke-width="2"/>'],
 ['','<path d="M5 3l4-3h18v28l-3 3H5z" fill="#d8dff0"/><path d="M4 4h22v28H4z" fill="#1d318f"/><circle cx="15" cy="17" r="7" fill="none" stroke="#fff" stroke-width="2"/><text x="15" y="22" font-size="13" font-weight="700" fill="#fff">?</text>'],
 ['','<path d="M1 1h20v17H10l-4 5v-5H1z" fill="#f3f7fb"/><text x="11" y="15" font-size="16" font-weight="700" fill="#1679b5">?</text><path d="M10 26q3-2 3-7 1-6 7-7 7 1 8 7 0 5 3 7z" fill="#e2a72a"/><path d="M9 25h23v3H9z" fill="#c58a2a"/><path d="M12 28h16v3H12z" fill="#452a15"/><circle cx="20" cy="12" r="2" fill="#ffda73"/>'],
 ['','<path d="M4 8L20 1l7 2v26l-7 3L4 26l16 2V6L9 9v15l-5 2z" fill="#eb3c00"/>'],
 ['','<path d="M5 0h9l-3 9h7L5 30l3-14H2z" fill="#f6b52a"/><circle cx="21" cy="21" r="9.500" fill="#efefef" stroke="#666" stroke-width="2"/><path d="M19 7h5v4h-5z" fill="#777"/><path d="M21 21l4 5" stroke="#d33" stroke-width="1.500"/><path d="M14 21h2M26 21h2M21 28v-2M21 14v2" stroke="#333"/>'],
 ['hot stack','<circle cx="16" cy="16" r="15" fill="#4caf50"/><path d="M16 16L3 8.500A15 15 0 0 1 29.500 9H16z" fill="#dd4b3e"/><path d="M29.500 9A15 15 0 0 1 15 31l7-12V9z" fill="#fdd04c"/><circle cx="16" cy="16" r="7.500" fill="#fff"/><circle cx="16" cy="16" r="5.800" fill="#4285f4"/>'],
 ['','<path d="M1 3h30v20H1z" fill="#82c4ec" stroke="#3b85b8"/><circle cx="9" cy="10" r="5" fill="#f4b74f"/><path d="M9 10V5h5z" fill="#fff"/><path d="M18 7h4v3h-4zm6 0h4v3h-4zM18 14h4v3h-4zm6 0h4v3h-4z" fill="#fff" stroke="#2771a5"/><path d="M5 18h2M9 18h2" stroke="#f4a52b" stroke-width="2"/><path d="M12 26h11v4H12z" fill="#d8dde0"/><circle cx="14" cy="25" r="4" fill="#dedede"/>'],
 ['','<path d="M12 1a15 15 0 0 0 0 30 18 18 0 0 1 0-30z" fill="#f49125"/><circle cx="18" cy="16" r="14" fill="#2c2255"/><path d="M4 12h28M4 16h28M4 20h28" stroke="#fff" stroke-width="2"/>'],
 ['on stack','<path d="M0 0h32v32H0z" fill="#fbe300"/><path d="M16 5c8 0 13 4 13 10s-5 10-13 10l-6 5 1-6C6 23 3 19 3 15 3 9 8 5 16 5z" fill="#391b1b"/><text x="16" y="19" font-size="9" font-weight="700" fill="#fbe300" textLength="18" lengthAdjust="spacingAndGlyphs">TALK</text>'],
 ['','<rect width="32" height="32" rx="5" fill="#00b900"/><path d="M16 4c7 0 12 4 12 9.500S21 25 15 29v-5C8 24 4 19 4 14 4 8 9 4 16 4z" fill="#fff"/><text x="16" y="17.500" font-size="8.500" font-weight="700" fill="#00b900" textLength="18" lengthAdjust="spacingAndGlyphs">LINE</text>'],
 ['','<ellipse cx="12" cy="17" rx="11" ry="6" fill="#a8b7c7"/><ellipse cx="14" cy="9" rx="11" ry="8" fill="#f8f8f8" stroke="#c83b43" stroke-width="1.600"/><path d="M9 4l13 17M20 6l-4 17" stroke="#8d9ba8" stroke-width="2"/><ellipse cx="16" cy="27" rx="2.500" ry="4" fill="none" stroke="#3f9ed8" stroke-width="2"/><ellipse cx="26" cy="23" rx="4" ry="3" fill="none" stroke="#3f9ed8" stroke-width="2"/>'],
 ['','<path d="M11 2h17l3 22-7 7L2 27z" fill="#8cc5cf"/><path d="M12 4h15L21 28 2 25z" fill="#a6d5dc"/><path d="M28 5l3 19-7 7z" fill="#f0f0e7"/><path d="M11 3h18" stroke="#667" stroke-width="3" stroke-dasharray="2 1"/>'],
 ['','<path d="M5 1h22v30H5z" fill="#8cc6ea" stroke="#d2eaf8"/><path d="M8 4h16v8H8z" fill="#f5f1d5"/><text x="21" y="11" font-size="8" fill="#555">0</text><path d="M8 16h17M8 20h17M8 24h17M8 28h17" stroke="#fff" stroke-width="3" stroke-dasharray="3 1.500"/><path d="M22 22h3v7h-3z" fill="#f4a52b"/>'],
 ['','<path d="M0 0h18a14 14 0 1 1-18 15z" fill="#e8e1ea"/><circle cx="16" cy="17" r="14" fill="#e6d9e9"/><circle cx="16" cy="17" r="12" fill="#7b2a88"/><circle cx="16" cy="16" r="7" fill="#f3e5f4"/><circle cx="16" cy="16" r="3" fill="#7b2a88"/><path d="M16 9v5M22 12l-4 3M22 20l-5-2M14 23l1-5M10 18h4M11 11l4 4" stroke="#7b2a88" stroke-width="1.500"/>'],
 ['','<path d="M1 3h30v25H1z" fill="#080808" stroke="#c5c9cc" stroke-width="1.500"/><path d="M1 3h30v3H1z" fill="#e0e0e0"/><text x="10.500" y="16" font-size="9" fill="#fff" textLength="13" lengthAdjust="spacingAndGlyphs" font-family="Liberation Mono">C:\\</text><path d="M18 15.500h8" stroke="#fff"/>'],
 ['','<path d="M2 3l4-3h24v29l-4 2H2z" fill="#fff" stroke="#d34b23" stroke-width="2"/><path d="M2 3l18-2v30L2 29z" fill="#f4a77f"/><text x="12" y="25" font-size="25" font-weight="700" fill="#d4431c">P</text><path d="M15 20l15-4v13H17z" fill="#fff"/><circle cx="22" cy="22" r="4" fill="#ed6c38"/><path d="M25 24q3 2 0 6" stroke="#d34b23" fill="none"/>'],
 ['','<path d="M1 19C2 4 24 3 26 13c1 7-6 3-6 9s-4 8-10 7-10-3-9-10z" fill="#cde6f2"/><circle cx="8" cy="17" r="3" fill="#e65343"/><circle cx="16" cy="10" r="3" fill="#9cbf39"/><circle cx="9" cy="24" r="3" fill="#3c85d3"/><circle cx="10" cy="11" r="2.500" fill="#f0c541"/><path d="M28 8L19 31l-3 0L26 6z" fill="#d9923c"/><path d="M25 7q0-7 4-6 3 4 0 9z" fill="#c9a16d"/>'],
 ['on','<path d="M23 0l8 4v24l-8 4L9 18l-6 5-3-2 6-5-6-5 3-2 6 5zM23 9l-8 7 8 7z" fill="#229bdf" fill-rule="evenodd"/><path d="M23 0l8 4v24l-8 4z" fill="#39adf0"/>'],
 ['','<circle cx="15" cy="16" r="13.500" fill="none" stroke="#298b3c" stroke-width="4" stroke-dasharray="3 2"/><circle cx="15" cy="16" r="13" fill="#36923b"/><path d="M30 3q5 26-12 28Q4 32 3 22q1-8 12-9 11 0 15-10z" fill="#7dc84a"/><path d="M7 26q14-1 21-12" stroke="#edffd9" fill="none" stroke-width="1.500"/>'],
 ['','<circle cx="16" cy="16" r="16" fill="#75aadb"/><text x="16" y="22" font-size="19" fill="#fff" style="font-family:Liberation Serif">R</text>'],
 ['','<rect x="1" y="1" width="30" height="30" rx="3" fill="#15405c"/><path d="M7 22Q2 8 5 5q8-2 14 10 3 8 8 9l-5 1 5 4q-8-2-12-9l-3-5-1 6-3-4z" stroke="#e5eef2" stroke-width="1.400" fill="none"/><path d="M22 3l3 1 1 3 4 3M22 4l1 3 3 1" stroke="#fff" stroke-width="1.800" fill="none"/>'],
 ['on','<path d="M0 8l17-6 5 20-15 5z" fill="#82cf76"/><path d="M7 5l16 1-1 21-14-2z" fill="#89c5ec"/><path d="M11 11l17-5 4 18-16 6z" fill="#f8dc56"/>'],
 ['on','<path d="M2 5h9l1-2h7l1 2h10v23H2z" fill="#f5f5f5"/><circle cx="12" cy="17" r="7" fill="#fff" stroke="#ddd"/><circle cx="12" cy="17" r="5" fill="#eb6420"/><path d="M23 10h4v15h-4z" fill="#eb6420"/>']
];
define('task-bar',()=>`
<style>
:host{display:flex;height:40px;align-items:center;flex:none;box-sizing:border-box;border-top:1px solid #244b73;background:repeating-linear-gradient(38deg,rgba(255,255,255,.035) 0 5px,transparent 5px 13px,rgba(0,20,60,.05) 13px 21px),linear-gradient(90deg,#3c6b92 0,#35658f 30%,#2c5a90 55%,#294f82 80%,#244478 100%)}
.start{width:50px;display:flex;justify-content:center}
svg text{font-family:"Liberation Sans",sans-serif;text-anchor:middle}
.tray{display:flex;align-items:center;gap:9px;margin-left:44px}
.clock{width:74px;margin-left:1px;color:#fff;font:13px/18px "Noto Sans CJK KR",sans-serif;display:flex;flex-direction:column;align-items:center}
.clock fit-text{line-height:18px}
</style>
<div class="start"><svg width="27" height="25" viewBox="0 0 27 25" fill="#fff"><path d="M0 3.500L11 2v10H0zM12 1.800L27 0v12H12zM0 13h11v10L0 21.500zM12 13h15v12l-15-2z"/></svg></div>
${ICONS.map(i=>`<task-item ${i[0]}><svg width="32" height="32" viewBox="0 0 32 32">${i[1]}</svg></task-item>`).join('')}
<div class="tray">
<svg width="12" height="16"><path d="M2 10h8L6 6z" fill="#fff"/></svg>
<svg width="16" height="16" viewBox="0 0 16 16"><path d="M1.500 1v15" stroke="#fff" stroke-width="2"/><path d="M3 2h5l1 2h6v6H8L7 8H3z" fill="#fff"/><circle cx="11" cy="11" r="4.500" fill="#d83a2c"/><path d="M9 9l4 4M13 9l-4 4" stroke="#fff" stroke-width="1.300"/></svg>
<svg width="16" height="16" viewBox="0 0 16 16" fill="none" stroke="#fff" stroke-width="1.300"><path d="M5 3h10v8H5zM7 14h7M10 11v3M1 1h4v5H1zM3 6v8h3"/></svg>
<svg width="16" height="16" viewBox="0 0 16 16"><path d="M1 5h3l5-4v14l-5-4H1z" fill="#fff"/><circle cx="11" cy="11" r="4.500" fill="#d83a2c"/><path d="M9 9l4 4M13 9l-4 4" stroke="#fff" stroke-width="1.300"/></svg>
<svg width="16" height="16" viewBox="0 0 16 16" style="margin-left:2px"><circle cx="8" cy="8" r="7.500" fill="#a9b7c7"/><path d="M5 5l6 6M11 5l-6 6" stroke="#35476a" stroke-width="2.200"/></svg>
<div class="clock"><fit-text w="52">오후 6:58</fit-text><fit-text w="66">2020-02-13</fit-text></div></div>`);

define('desk-top',`<style>:host{display:flex;flex-direction:column;width:1920px;height:1080px;overflow:hidden}.v{display:flex;height:969px;flex:none}</style>
<browser-chrome></browser-chrome><div class="v"><web-page></web-page><scroll-bar></scroll-bar></div><task-bar></task-bar>`);
</script>
</body>
</html>
